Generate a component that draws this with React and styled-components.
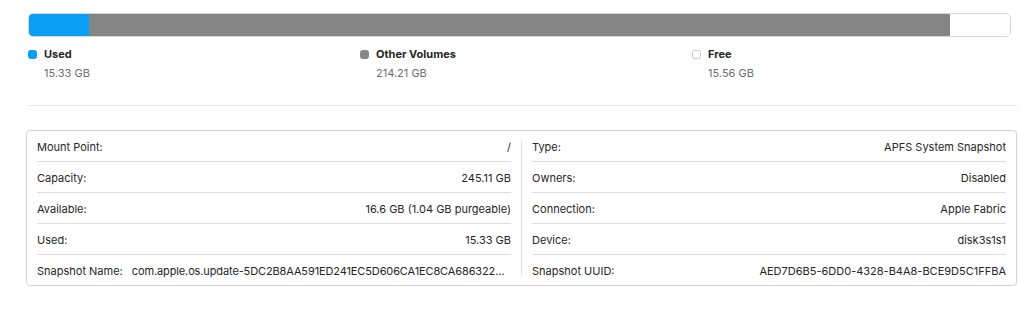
import React from "react";
import styled, { createGlobalStyle } from "styled-components";

const Global = createGlobalStyle`
  html, body { margin: 0; padding: 0; background: #ffffff; }
  body {
    font-family: Inter, "Noto Sans", "Liberation Sans", sans-serif;
    font-size: 11px;
    color: #262626;
    -webkit-font-smoothing: antialiased;
  }
`;

const Page = styled.div`
  width: 1031px;
  box-sizing: border-box;
  padding: 13px 14px 0 26px;
`;

const Bar = styled.div`
  display: flex;
  height: 24px;
  margin: 0 6px 0 2px;
  box-sizing: border-box;
  border: 1px solid #d4d4d4;
  border-radius: 5px;
  overflow: hidden;
  background: #ffffff;
`;

const Segment = styled.div`
  flex: ${(p) => p.$grow} 0 0;
  background: ${(p) => p.$color};
  margin: -1px 0;
  box-shadow: ${(p) =>
    p.$shade
      ? "inset 0 1px 0 rgba(0,0,0,0.35), inset 0 -1px 0 rgba(0,0,0,0.18)"
      : "none"};
`;

const Legend = styled.div`
  display: grid;
  grid-template-columns: 332px 332px 1fr;
  margin: 11px 0 0 2px;
`;

const LegendItem = styled.div`
  display: grid;
  grid-template-columns: 16px 1fr;
  row-gap: 6px;
  align-items: center;
`;

const Swatch = styled.span`
  width: 9px;
  height: 9px;
  border-radius: 2.5px;
  box-sizing: border-box;
  background: ${(p) => p.$color};
  border: 1px solid ${(p) => p.$border || p.$color};
`;

const LegendTitle = styled.span`
  font-weight: 700;
  color: #262626;
  line-height: 13px;
`;

const LegendValue = styled.span`
  grid-column: 2;
  color: #6e6e6e;
  line-height: 13px;
`;

const Rule = styled.div`
  height: 1px;
  background: #e6e6e6;
  margin: 25px 0 0 2px;
`;

const InfoBox = styled.div`
  margin-top: 24px;
  border: 1px solid #d3d3d3;
  border-radius: 4px;
  display: grid;
  grid-template-columns: 1fr 1px 1fr;
  column-gap: 10px;
  padding: 0 10px;
`;

const Column = styled.div`
  display: flex;
  flex-direction: column;
  min-width: 0;
`;

const VDivider = styled.div`
  background: #dcdcdc;
  margin: 10px 0;
`;

const Row = styled.div`
  display: flex;
  align-items: center;
  height: 31px;
  padding-top: 1px;
  box-sizing: border-box;
  border-bottom: 1px solid #dedede;
  &:last-child { border-bottom: none; height: 30px; }
`;

const Label = styled.span`
  flex: none;
  margin-right: 9px;
  color: #262626;
`;

const Value = styled.span`
  flex: 1;
  min-width: 0;
  text-align: ${(p) => (p.$left ? "left" : "right")};
  letter-spacing: ${(p) => (p.$left ? "-0.12px" : "normal")};
  white-space: nowrap;
  overflow: hidden;
  text-overflow: ellipsis;
  color: #262626;
`;

const usage = [
  { name: "Used", value: 15.33, grow: 15.33, color: "#0a9ff5" },
  { name: "Other Volumes", value: 214.21, grow: 218.6, color: "#858585", shade: true },
  { name: "Free", value: 15.56, grow: 15.2, color: "#ffffff", border: "#c8c8c8" },
];

const left = [
  ["Mount Point:", "/"],
  ["Capacity:", "245.11 GB"],
  ["Available:", "16.6 GB (1.04 GB purgeable)"],
  ["Used:", "15.33 GB"],
  ["Snapshot Name:", "com.apple.os.update-5DC2B8AA591ED241EC5D606CA1EC8CA686322…", true],
];

const right = [
  ["Type:", "APFS System Snapshot"],
  ["Owners:", "Disabled"],
  ["Connection:", "Apple Fabric"],
  ["Device:", "disk3s1s1"],
  ["Snapshot UUID:", "AED7D6B5-6DD0-4328-B4A8-BCE9D5C1FFBA"],
];

function Rows({ rows }) {
  return (
    <Column>
      {rows.map(([l, v, trunc]) => (
        <Row key={l}>
          <Label>{l}</Label>
          <Value $left={trunc}>{v}</Value>
        </Row>
      ))}
    </Column>
  );
}

export default function App() {
  return (
    <>
      <Global />
      <Page>
        <Bar>
          {usage.map((u) => (
            <Segment
              key={u.name}
              $grow={u.grow}
              $color={u.color}
              $shade={u.shade}
            />
          ))}
        </Bar>
        <Legend>
          {usage.map((u) => (
            <LegendItem key={u.name}>
              <Swatch $color={u.color} $border={u.border} />
              <LegendTitle>{u.name}</LegendTitle>
              <LegendValue>{u.value.toFixed(2)} GB</LegendValue>
            </LegendItem>
          ))}
        </Legend>
        <Rule />
        <InfoBox>
          <Rows rows={left} />
          <VDivider />
          <Rows rows={right} />
        </InfoBox>
      </Page>
    </>
  );
}
